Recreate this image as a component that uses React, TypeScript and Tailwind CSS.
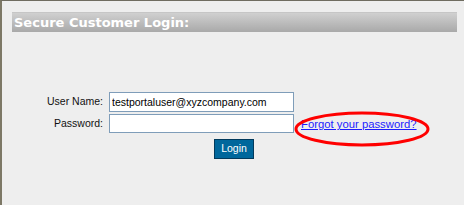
export default function App() {
  return (
    <div className="h-[205px] w-[464px] overflow-hidden border-l-2 border-t border-l-[#7d7866] border-t-[#6f6c60] bg-[#eeeeee] pl-[10px] pr-[7px] pt-[11px] font-['Liberation_Sans',Arial,sans-serif]">
      {/* Title bar */}
      <div className="flex h-[20px] items-center border-t border-t-[#c6c6c6] bg-gradient-to-b from-[#d0d0d0] to-[#a9a9a9] pl-[2px]">
        <span className="font-['DejaVu_Sans',Verdana,sans-serif] text-[13px] font-bold leading-none text-white">
          Secure Customer Login:
        </span>
      </div>

      {/* Login form */}
      <div className="mt-[60px] flex flex-col text-[10.5px] text-[#111111]">
        <div className="flex items-center">
          <label className="w-[91px] text-right">User Name:</label>
          <input
            className="ml-[6px] h-[20px] w-[185px] border border-[#7f9db9] bg-white px-[2px] text-[10.5px] text-black outline-none"
            defaultValue="testportaluser@xyzcompany.com"
          />
        </div>
        <div className="relative mt-[2px] flex items-center">
          <label className="w-[91px] text-right">Password:</label>
          <input
            type="password"
            className="ml-[6px] h-[19px] w-[185px] border border-[#7f9db9] bg-white px-[2px] outline-none"
          />
          <a href="#" className="ml-[7px] mt-[2px] text-[11.3px] text-[#1c1cff] underline">
            Forgot your password?
          </a>
          {/* hand-drawn highlight round the link */}
          <svg
            className="pointer-events-none absolute left-[282px] top-[-3px]"
            width="136"
            height="36"
            viewBox="0 0 136 36"
          >
            <ellipse cx="68" cy="18" rx="66" ry="16" fill="none" stroke="#ff0000" strokeWidth="3" />
          </svg>
        </div>
        <div className="mt-[6px] flex pl-[202px]">
          <button className="h-[20px] w-[40px] border border-[#023a5c] bg-[#00679c] text-[10.5px] text-white">
            Login
          </button>
        </div>
      </div>
    </div>
  );
}
